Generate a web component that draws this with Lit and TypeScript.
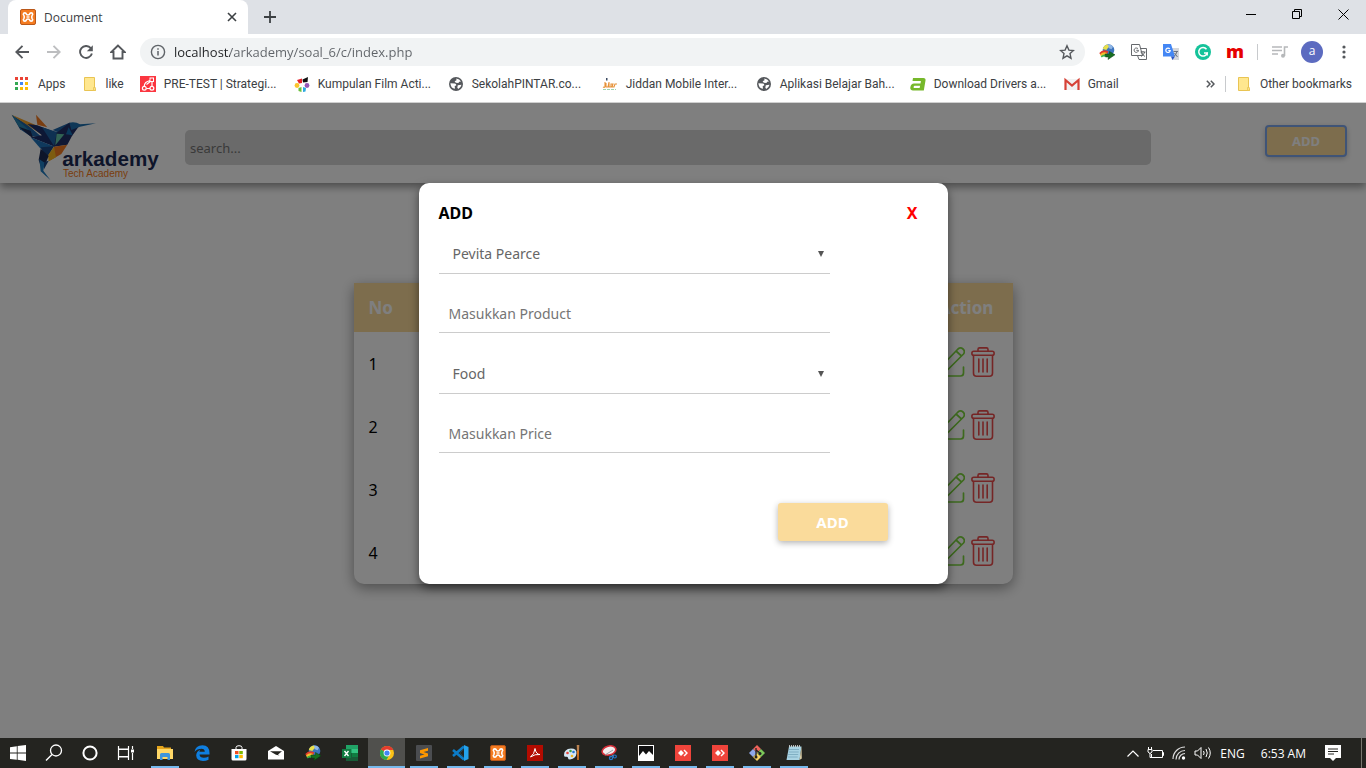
import { LitElement, html, css, svg, nothing, TemplateResult } from "lit";
import { customElement, state } from "lit/decorators.js";

const icon = (w: number, h: number, box: string, body: unknown) =>
  html`<svg width=${w} height=${h} viewBox=${box} aria-hidden="true">${body}</svg>`;

const xampp = icon(16, 16, "0 0 16 16", svg`
  <rect x=".5" y=".5" width="15" height="15" rx="1.5" fill="#f47b20" stroke="#b9581a"/>
  <path d="M3.700 4.200Q5 3.400 6 4.400 6.500 6 8 6q1.500 0 2-1.600 1-1 2.300-.2.900 1.300-.3 2.500-.5 1.300 0 2.600 1.200 1.200.3 2.500-1.300.8-2.300-.2-.5-1.600-2-1.600t-2 1.600q-1 1-2.300.2-.9-1.300.3-2.500.5-1.300 0-2.600-1.200-1.200-.3-2.500z" fill="none" stroke="#fff" stroke-width="1.600" stroke-linejoin="round"/>
  <path d="M6.500 8h3" stroke="#fff" stroke-width="1.400"/>`);

const folder = icon(16, 16, "0 0 16 16", svg`
  <path d="M2.500 1.500h10v10.500l1 1v1.500h-11z" fill="#ffe78f" stroke="#e9c453"/>
  <path d="M11.500 14.500v-3h1.800v3z" fill="#ffe78f" stroke="#e9c453" stroke-width=".8"/>`);

const globe = icon(16, 16, "0 0 16 16", svg`
  <circle cx="8" cy="8" r="7" fill="#55585c"/>
  <path d="M2.400 7.300l4.600.2q1.600.4 1.200 2l-1.500.6.300 2.700Q2.600 12.300 2.400 7.300zM8.300 2.400q3.300.2 4.700 3.100l-1.800.3-.8 1.300-2.600-.3-1.200-1.500 1.900-1zM9.800 9.200l3.700-.4q-.6 2.900-3.300 4.300l-.9-1.700z" fill="#fff"/>`);

const idm = icon(16, 16, "0 0 16 16", svg`
  <circle cx="9.500" cy="6" r="5.800" fill="#3d74bd"/>
  <path d="M8 .8q4-.8 6 2l-1.500 2.500-2.500-1z" fill="#8fb6e6"/>
  <path d="M3.800 5q.8-4 5-4.500l1 2.500-2.500 3z" fill="#e9e04a"/>
  <path d="M.3 9Q4 4.500 9.500 7.500L8 10Q4 8 1.500 11z" fill="#e23c2c"/>
  <path d="M1 10.600q3.500-3.500 7-1.600l-1.200 2q-2.500-1-4.800 1.300z" fill="#f5bd2c"/>
  <path d="M1.700 12.200q2.800-2.600 5.300-1.400l-1 2q-1.700-.6-3.200.7z" fill="#3ab54a"/>
  <path d="M6 10h4.500V7.500L16 10.800 9 15.500l.5-2.500H6.500z" fill="#176f20" stroke="#0c3f12" stroke-width=".5"/>`);

const apps = icon(16, 16, "0 0 16 16", svg`
  ${["#ea4335", "#ea4335", "#ea4335", "#34a853", "#4285f4", "#fbbc05", "#34a853", "#fbbc05", "#fbbc05"].map(
    (c, i) => svg`<rect x=${1 + (i % 3) * 5} y=${1 + Math.floor(i / 3) * 5} width="3" height="3" fill=${c}/>`)}`);

const bookmarks: { label: string; icon: TemplateResult; wide?: boolean }[] = [
  { label: "Apps", icon: apps },
  { label: "like", icon: folder },
  { label: "PRE-TEST | Strategi...", wide: true, icon: icon(16, 16, "0 0 16 16", svg`
    <rect width="16" height="16" fill="#fb3640"/>
    <path d="M4.500 12.500Q3.500 7 7.500 5.500L11.500 4M4.500 12.500h7.200M12 4.500v7M6.500 8.500L11 5" fill="none" stroke="#fff" stroke-width="1.200"/>
    <circle cx="4.300" cy="12.300" r="1.900" fill="#fb3640" stroke="#fff" stroke-width="1.200"/><circle cx="11.900" cy="12.300" r="1.900" fill="#fb3640" stroke="#fff" stroke-width="1.200"/><rect x="10" y="2" width="3.500" height="3.500" fill="#fb3640" stroke="#fff"/>`) },
  { label: "Kumpulan Film Acti...", wide: true, icon: icon(16, 16, "0 0 16 16", svg`
    <path d="M3 4l5-1.500V7l-3 .5z" fill="#e5232b"/><path d="M8.500 3.500L14 1l-.5 5-4.500.5z" fill="#111"/>
    <circle cx="3" cy="9.500" r="2.400" fill="#fbc52d"/><circle cx="13" cy="9.500" r="2.400" fill="#9656b5"/>
    <path d="M4.500 12l3-1v5l-3-1z" fill="#6cbf3c"/><path d="M9 11l3 1-.5 3.500L9 16z" fill="#2ca9e1"/>`) },
  { label: "SekolahPINTAR.co...", wide: true, icon: globe },
  { label: "Jiddan Mobile Inter...", wide: true, icon: icon(16, 16, "0 0 16 16", svg`
    <path d="M1 11q2 1 2-1V6M4 7v4h2l1-5v5h2V8h2l-1 3h2l1-3h2" fill="none" stroke="#e69138" stroke-width="1.100"/>
    <rect x="4" y="2" width="1.500" height="2.500" fill="#3c4b62"/><path d="M1 13.500h13" stroke="#9fd3b0" stroke-dasharray="3 1"/>`) },
  { label: "Aplikasi Belajar Bah...", wide: true, icon: globe },
  { label: "Download Drivers a...", wide: true, icon: icon(16, 16, "0 0 16 16", svg`
    <path d="M3 2h10.500q2.500 0 2 2.500L13.800 14.500H3Q-.3 14.500.4 11 1 7.500 4 7.500h6.500l.4-2.500H2.500zM4.800 9.800q-1 0-1.200 1.200-.1 1.100 1 1.100h5l.5-2.300z" fill="#76b82a"/>`) },
  { label: "Gmail", icon: icon(16, 16, "0 0 16 16", svg`
    <rect x="1" y="3" width="14" height="11" rx="1" fill="#f2f2f2"/>
    <path d="M1.500 14V4L8 9.500 14.500 4v10" fill="none" stroke="#d64237" stroke-width="2.200"/>`) },
];

const extensions = [
  { name: "Internet Download Manager", icon: idm },
  { name: "Translate page", icon: icon(16, 16, "0 0 16 16", svg`
    <path d="M.5.500h8l3 11h-11zM9 4.500h6.500v11H8l-1.500-4" fill="none" stroke="#66696d"/>
    <path d="M7 4.800a2.200 2.200 0 1 0 .5 1.500H5.300M9.500 8h5M12 7v1M13.800 8q-1 3-3.800 4.500M10.500 8.500q1 2.500 3.500 4" fill="none" stroke="#66696d"/>`) },
  { name: "Google Translate", icon: icon(16, 16, "0 0 16 16", svg`
    <path d="M7 4h9v12H9z" fill="#d5d7db"/><path d="M0 0h8l4 12.500H0z" fill="#4487f4"/><path d="M8 12.500h4L9.500 16z" fill="#2a56c6"/>
    <path d="M6.800 5a2.200 2.200 0 1 0 .4 1.600H5.300" fill="none" stroke="#fff" stroke-width="1.200"/>
    <path d="M10.500 7.500h4.500M14 7.500q-1 3-2.500 4.500M11.500 9l3 4" stroke="#6b7380" fill="none"/>`) },
  { name: "Grammarly", icon: icon(16, 16, "0 0 16 16", svg`
    <circle cx="8" cy="8" r="8" fill="#15c39a"/><path d="M11.500 5.200A4.300 4.300 0 1 0 12.200 9H9" fill="none" stroke="#fff" stroke-width="1.500"/><path d="M12.300 8.500v3" stroke="#fff" stroke-width="1.200"/>`) },
];

const startItems = [
  { name: "Start", icon: icon(16, 16, "0 0 16 16", svg`<path d="M0 2.200l6.800-1v6.300H0zM7.600 1.100L16 0v7.500H7.600zM0 8.400h6.800v6.400L0 13.900zM7.600 8.400H16V16l-8.400-1.200z" fill="#fff"/>`) },
  { name: "Search", icon: icon(18, 18, "0 0 18 18", svg`<circle cx="11" cy="6.500" r="5.500" fill="none" stroke="#fff" stroke-width="1.300"/><path d="M7 10.500L1 16.500" stroke="#fff" stroke-width="1.500"/>`) },
  { name: "Cortana", icon: icon(16, 16, "0 0 16 16", svg`<circle cx="8" cy="8" r="6.600" fill="none" stroke="#fff" stroke-width="2"/>`) },
  { name: "Task View", icon: icon(18, 16, "0 0 18 16", svg`<path d="M1.500 1v3h10V1M1.500 15v-3h10v3M1.500 4.500v7h10v-7zM15.500 1v3M15.500 8v7" fill="none" stroke="#fff" stroke-width="1.200"/><rect x="14" y="4.500" width="3" height="3" fill="#fff"/>`) },
];

const anydesk = icon(16, 16, "0 0 16 16", svg`<rect width="16" height="16" fill="#ef443b"/><path d="M3 8l3-3 3 3-3 3z" fill="#fff"/><path d="M8.500 5.500l1-1L13 8l-3.500 3.500-1-1L11 8z" fill="#fff"/>`);

const taskItems: { name: string; open?: boolean; active?: boolean; icon: TemplateResult }[] = [
  { name: "File Explorer", open: true, icon: icon(16, 16, "0 0 16 16", svg`<path d="M0 1h6l1 1.500h7V5H0z" fill="#e5a51c"/><path d="M0 4h16v10H0z" fill="#ffd867"/><path d="M3 15V9.500Q3 8 4.500 8h7Q13 8 13 9.500V15h-2.500v-3h-5v3z" fill="#3d95dc"/>`) },
  { name: "Edge", icon: icon(16, 16, "0 0 16 16", svg`<path d="M.5 7Q1.500.200 8.500.200 15.500.500 15.500 8v1.500h-10q.3 3.200 4.300 3.200 2.500 0 4.700-1.300v3.300Q12 16 9 16 2.500 15.800 2.200 10.500 2.200 6.500 6.500 4.500 5.500 5.500 5.400 6.800h5.400Q10.700 3.700 7.600 3.700 3 3.700.5 7z" fill="#0f7fe0"/>`) },
  { name: "Store", icon: icon(16, 16, "0 0 16 16", svg`<path d="M5 4V2.500Q5 .700 8 .700t3 1.800V4" fill="none" stroke="#fff"/><path d="M.5 4h15v10q0 1.500-1.500 1.500H2Q.500 15.500.500 14z" fill="#fff"/><rect x="4" y="6" width="3.500" height="3.200" fill="#f25022"/><rect x="8.300" y="6" width="3.500" height="3.200" fill="#7fba00"/><rect x="4" y="10" width="3.500" height="3.200" fill="#00a4ef"/><rect x="8.300" y="10" width="3.500" height="3.200" fill="#ffb900"/>`) },
  { name: "Mail", icon: icon(18, 16, "0 0 18 16", svg`<path d="M1 6l8-5 8 5v8.500H1z" fill="#fff"/><path d="M3 6.200h12L11 9.500l1.500 1-3.500-.8z" fill="#242420"/>`) },
  { name: "Internet Download Manager", icon: idm },
  { name: "Excel", icon: icon(16, 16, "0 0 16 16", svg`<path d="M4 0h12v16H4z" fill="#21a366"/><path d="M10 4h6v4h-6z" fill="#33c481"/><path d="M4 8h12v8H4z" fill="#185c37"/><path d="M10 8h6v4h-6z" fill="#107c41"/><rect y="4" width="9" height="9" fill="#107c41"/><path d="M2.500 6l4 5M6.500 6l-4 5" stroke="#fff" stroke-width="1.400"/>`) },
  { name: "Chrome", open: true, active: true, icon: icon(16, 16, "0 0 16 16", svg`<circle cx="8" cy="8" r="7" fill="#fbc116"/><path d="M8 8L1.900 4.500A7 7 0 0 1 14.300 5H8z" fill="#e33b2e"/><path d="M8 8L1.900 4.500A7 7 0 0 0 7.500 15L10.500 9.500z" fill="#2da94f"/><circle cx="8" cy="8" r="3.400" fill="#fff"/><circle cx="8" cy="8" r="2.600" fill="#4285f4"/>`) },
  { name: "Sublime Text", open: true, icon: icon(16, 16, "0 0 16 16", svg`<rect width="16" height="16" rx="1" fill="#4b4d50"/><path d="M4 5.200L12 3v2.700L7.500 7 12 8.500v2.800L4 13.500v-2.700l4.500-1.300L4 8z" fill="#ff9800"/>`) },
  { name: "Visual Studio Code", open: true, icon: icon(17, 16, "0 0 17 16", svg`<path d="M12 1.500L1 11M12 14.500L1 5" stroke="#0c7cc7" stroke-width="2.600"/><path d="M12 0l4.500 2v12L12 16V11.500L7.500 8 12 4.500z" fill="#24a2ec"/><path d="M12 4.500v7L7.500 8z" fill="#242420"/>`) },
  { name: "XAMPP", open: true, icon: xampp },
  { name: "Adobe Reader", open: true, icon: icon(16, 16, "0 0 16 16", svg`<rect width="16" height="16" fill="#b30b00"/><path d="M3.500 12q4-3 4.500-8.500 1 6 5 6-5-.700-9.500 2.500z" fill="none" stroke="#fff"/>`) },
  { name: "Paint", open: true, icon: icon(16, 16, "0 0 16 16", svg`<path d="M0 10Q0 4 7 3.500q6 0 5.500 5T6 14.500q-2 0-2-1.500t-2-1.200T0 10z" fill="#d5e7f4"/><circle cx="3.500" cy="8" r="1.300" fill="#e3453a"/><circle cx="6.500" cy="6" r="1.300" fill="#40a546"/><circle cx="9.500" cy="7" r="1.300" fill="#2a75cf"/><circle cx="8" cy="11" r="1.300" fill="#efb921"/><path d="M13 6h2l-.3 9h-1.400z" fill="#e67a1f"/><path d="M12.700 0h2.600l-.3 6h-2z" fill="#b98150"/>`) },
  { name: "Snipping Tool", open: true, icon: icon(16, 16, "0 0 16 16", svg`<ellipse cx="8" cy="5.500" rx="7" ry="4.500" fill="#f4eeee" stroke="#d6303a" stroke-width="1.600" transform="rotate(-15 8 5.500)"/><path d="M4 10l8-5M9 12l4-2" stroke="#9ca4ab"/><circle cx="10" cy="13" r="1.600" fill="none" stroke="#2777c9" stroke-width="1.200"/><circle cx="13.800" cy="11.500" r="1.500" fill="none" stroke="#2777c9" stroke-width="1.200"/>`) },
  { name: "Photos", open: true, icon: icon(16, 16, "0 0 16 16", svg`<rect x=".5" y=".5" width="15" height="15" fill="#111" stroke="#fff"/><path d="M1 11l4-5 3 3.500 3-3.500 4 4v5H1z" fill="#fff"/>`) },
  { name: "AnyDesk", open: true, icon: anydesk },
  { name: "AnyDesk session", open: true, icon: anydesk },
  { name: "Git Bash", open: true, icon: icon(16, 16, "0 0 16 16", svg`<path d="M8 0l4 4-4 4-4-4z" fill="#f0635a"/><path d="M4 4l4 4-4 4-4-4z" fill="#8fa8ea"/><path d="M12 4l4 4-4 4-4-4z" fill="#7cc95a"/><path d="M8 8l4 4-4 4-4-4z" fill="#f6d263"/><path d="M7 3v9M7 5l4 3" stroke="#222" stroke-width="1.300"/><circle cx="7" cy="12" r="1.500" fill="#222"/><circle cx="11" cy="8.500" r="1.500" fill="#222"/>`) },
  { name: "Notepad", open: true, icon: icon(16, 16, "0 0 16 16", svg`<path d="M3 1.500h12.500L13.500 15H.500z" fill="#a9d3e3"/><path d="M15.500 1.500l.3 12-2.300 1.500z" fill="#d9cda6"/><path d="M3 4.500h10M2.700 7h10M2.200 9.500h10M1.700 12h10" stroke="#6f9fb4" stroke-width=".7"/><path d="M3 1h12" stroke="#e9e9e9" stroke-width="1.500" stroke-dasharray="1 1"/>`) },
];

const pencil = icon(30, 30, "0 0 30 30", svg`
  <g fill="none" stroke="#7bd33c" stroke-width="1.700" stroke-linejoin="round" stroke-linecap="round">
  <path d="M28.500 20v6q0 3-3 3H4q-3 0-3-3V7q0-3 3-3h7"/><path d="M23 2q2.500-2.200 5 0t.5 5L13 22.500l-6 1.500 1-6.500zM21 4l5.500 5"/></g>`);
const trash = icon(24, 30, "0 0 24 30", svg`
  <g fill="none" stroke="#ea4c4c" stroke-width="1.600" stroke-linejoin="round" stroke-linecap="round">
  <rect x=".9" y="4.200" width="22.200" height="4" rx="1.800"/><path d="M7 4V2.500Q7 .900 8.500 .900h7q1.500 0 1.500 1.600V4M2.500 8.500v17.700q0 3 3 3h13q3 0 3-3V8.500M7.800 12v13M12 12v13M16.200 12v13"/></g>`);

const logo = html`<svg class="logo" width="148" height="68" viewBox="33 33 444 204" role="img" aria-label="arkademy Tech Academy">
  <path d="M35 38L60 82 92 103 126 106 80 66z" fill="#1c63a5"/>
  <path d="M35 38L62 82 96 92z" fill="#2b86b0"/>
  <path d="M35 38L128 78 126 98z" fill="#f6a528"/><path d="M84 62L128 78 126 98z" fill="#f47b20"/>
  <path d="M56 74L92 86 100 110z" fill="#1b2a55"/>
  <path d="M82 66L112 70 170 92 164 134 92 106 126 100z" fill="#1b2f6b"/>
  <path d="M108 38L142 76 112 68z" fill="#f47b20"/>
  <path d="M126 76L178 92 158 84 208 62 192 96 162 132z" fill="#1c63a5"/>
  <path d="M170 92L208 62 240 68 216 102 202 128 162 134z" fill="#203068"/>
  <path d="M208 62Q226 58 240 67L288 64 240 74 214 84z" fill="#1c6fae"/>
  <path d="M170 95L193 97 166 130z" fill="#62c7a8"/>
  <path d="M206 76L218 100 198 97z" fill="#1573b6"/>
  <path d="M92 106L164 134 122 140z" fill="#1e73ba"/>
  <path d="M122 136L162 133 138 172z" fill="#1a4784"/>
  <path d="M162 134L202 128 184 156 146 178z" fill="#f47b20"/><path d="M162 134L168 166 146 178 144 160z" fill="#fbb91f"/>
  <path d="M122 140L146 162 132 196 120 186 116 174z" fill="#1b2a55"/>
  <path d="M118 172L134 182 130 206 151 234 122 208z" fill="#1f7cc0"/><path d="M132 180L146 176 132 202z" fill="#1a4784"/>
  <text class="brand" x="187" y="192">arkademy</text><text class="tagline" x="189" y="224">Tech Academy</text>
</svg>`;

@customElement("app-root")
export class AppRoot extends LitElement {
  @state() private open = true;

  static styles = css`
    :host { display: block; font-family: "Open Sans", "Noto Sans", sans-serif; font-size: 12px; color: #3c4043; }
    * { box-sizing: border-box; }
    svg { display: block; flex: none; }
    button, input, select { font: inherit; color: inherit; margin: 0; border: 0; background: none; padding: 0; border-radius: 0; outline: none; }
    a { color: inherit; text-decoration: none; }
    .screen { display: grid; grid-template-rows: auto 1fr auto; height: 100vh; min-height: 640px; }

    .tabs { display: flex; align-items: stretch; height: 34px; background: #dee1e6; padding-left: 8px; }
    .tab { display: flex; align-items: center; gap: 8px; width: 240px; padding: 0 11px 0 12px; background: #fff; border-radius: 8px 8px 0 0; }
    .tab span { flex: 1; }
    .plus { width: 44px; display: grid; place-items: center; }
    .window { margin-left: auto; display: flex; }
    .window button { width: 46px; height: 28px; display: grid; place-items: center; }
    .toolbar { display: flex; align-items: center; height: 36px; background: #fff; padding: 0 6px; }
    .nav { width: 32px; height: 32px; display: grid; place-items: center; }
    .address { flex: 1; display: flex; align-items: center; gap: 8px; height: 28px; margin: 0 6px; padding: 0 10px; border-radius: 14px; background: #f1f3f4; }
    .address input { flex: 1; min-width: 0; height: 28px; font-size: 13px; color: transparent; background: linear-gradient(to right, #202124 56px, #5f6368 56px); -webkit-background-clip: text; background-clip: text; }
    .rule { width: 1px; height: 16px; background: #c8cacd; margin: 0 6px; }
    .m { font: 900 18px/18px "Noto Sans", sans-serif; color: #e60000; padding-bottom: 3px; }
    .avatar { width: 22px; height: 22px; border-radius: 50%; background: #5c6bc0; color: #fff; line-height: 20px; }
    .bookmarks { display: flex; align-items: center; gap: 16px; height: 33px; padding: 0 14px 5px; background: #fff; border-bottom: 1px solid #d0d0d0; white-space: nowrap; font-family: Roboto, "Open Sans", sans-serif; }
    .bookmarks a { display: flex; align-items: center; gap: 8px; }
    .bookmarks a.wide { width: 138px; }
    .bookmarks .rule { margin: 0 -6px; }
    .bookmarks .more { margin-left: auto; }

    .page { position: relative; background: #fff; font-family: "Noto Sans", sans-serif; font-size: 16px; color: #000; overflow: hidden; }
    .head { display: flex; align-items: flex-start; height: 80px; padding: 10px 20px 0 11px; box-shadow: 0 4px 8px rgba(0, 0, 0, 0.4); }
    .brand { font: 700 62px "Liberation Sans", Arial, sans-serif; fill: #1b2a55; }
    .tagline { font: 400 30px "Liberation Sans", Arial, sans-serif; fill: #f47b20; }
    .search { flex: 1; min-width: 0; height: 35px; margin: 17px 115px 0 26px; padding: 0 5px; border-radius: 5px; background: #d4d4d4; font-size: 13px; }
    .search::placeholder { color: #757575; opacity: 1; }
    .gold { background: #fadb9b; color: #fff; font-weight: 700; border-radius: 3px; box-shadow: 0 2px 6px rgba(0, 0, 0, 0.3); }
    .open { width: 80px; height: 30px; margin-top: 13px; font-size: 13px; outline: 2px solid #7fa8ee; outline-offset: -1px; }
    .list { width: 659px; max-width: 90%; margin: 100px auto 0; border-collapse: collapse; border-radius: 0 0 10px 10px; box-shadow: 0 4px 14px rgba(0, 0, 0, 0.4); }
    .list th { height: 49px; padding: 0 15px; background: #fadb9b; color: #fff; text-align: left; font-size: 17px; font-weight: 700; }
    .list td { height: 63px; padding: 0 15px; }
    .list .last { width: 93px; text-align: center; }
    .actions { display: flex; gap: 6px; padding-bottom: 4px; }

    .overlay { position: absolute; inset: 0; display: flex; justify-content: center; align-items: flex-start; padding-top: 80px; background: rgba(0, 0, 0, 0.5); }
    .modal { width: 529px; max-width: 90%; padding: 20px 20px 43px; background: #fff; border-radius: 10px; box-shadow: 0 4px 10px rgba(0, 0, 0, 0.5); }
    .title { display: flex; justify-content: space-between; align-items: center; height: 20px; margin-bottom: 10px; padding-right: 10px; }
    .title h2 { margin: 0; font-size: 16px; line-height: 20px; }
    .title button { color: #f00; font-weight: 700; line-height: 20px; }
    form { display: flex; flex-direction: column; gap: 20px; font-size: 14px; color: #666; }
    .field { display: grid; align-items: center; width: 80%; }
    .field select, .field input { width: 100%; border-bottom: 1px solid #ccc; grid-area: 1 / 1; }
    .field select { appearance: none; height: 41px; padding-left: 14px; }
    .field input { height: 39px; padding-left: 10px; }
    .field input::placeholder { color: #757575; opacity: 1; }
    .field svg { grid-area: 1 / 1; justify-self: end; margin-right: 6px; pointer-events: none; }
    .submit { align-self: flex-end; width: 110px; height: 38px; margin: 30px 40px 0 0; color: #fff; font-size: 15px; }

    .taskbar { display: flex; height: 30px; background: #242420; color: #fff; }
    .taskbar button { width: 37px; height: 30px; display: grid; place-items: center; }
    .start { display: flex; margin-right: 2px; }
    .start button { width: 36px; }
    .apps { display: flex; }
    .apps .running { background: linear-gradient(#76b9ed, #76b9ed) center bottom / 28px 2px no-repeat; }
    .apps .active { background: linear-gradient(#76b9ed, #76b9ed) center bottom / 100% 2px no-repeat, #50504d; }
    .tray { margin-left: auto; display: flex; align-items: center; gap: 8px; padding-right: 10px; border-right: 1px solid #77776f; margin-right: 4px; }
    .tray .clock { margin-left: 8px; }
  `;

  private select(label: string, value: string) {
    return html`<div class="field">
      <select aria-label=${label}><option>${value}</option></select>
      ${icon(6, 6, "0 0 6 6", svg`<path d="M0 0h6L3 6z" fill="#555"/>`)}
    </div>`;
  }

  private modal() {
    return html`<div class="overlay">
      <section class="modal" role="dialog" aria-labelledby="dialog-title">
        <div class="title"><h2 id="dialog-title">ADD</h2><button @click=${() => (this.open = false)}>X</button></div>
        <form @submit=${(e: Event) => e.preventDefault()}>
          ${this.select("Cashier", "Pevita Pearce")}
          <div class="field"><input aria-label="Product" placeholder="Masukkan Product" /></div>
          ${this.select("Category", "Food")}
          <div class="field"><input aria-label="Price" placeholder="Masukkan Price" /></div>
          <button class="gold submit">ADD</button>
        </form>
      </section>
    </div>`;
  }

  render() {
    return html`<div class="screen">
      <header>
        <div class="tabs">
          <div class="tab">${xampp}<span>Document</span>
            <button aria-label="Close tab">${icon(10, 10, "0 0 10 10", svg`<path d="M1 1l8 8M9 1l-8 8" stroke="#3c4043" stroke-width="1.600"/>`)}</button></div>
          <button class="plus" aria-label="New tab">${icon(12, 12, "0 0 12 12", svg`<path d="M6 0v12M0 6h12" stroke="#3c4043" stroke-width="1.800"/>`)}</button>
          <div class="window">
            <button aria-label="Minimize">${icon(10, 10, "0 0 10 10", svg`<path d="M0 5.500h10" stroke="#000"/>`)}</button>
            <button aria-label="Restore">${icon(10, 10, "0 0 10 10", svg`<path d="M.5 2.500h7v7h-7zM2.500 2.500v-2h7v7h-2" fill="none" stroke="#000"/>`)}</button>
            <button aria-label="Close">${icon(11, 11, "0 0 11 11", svg`<path d="M.5.500l10 10M10.500.500l-10 10" stroke="#000"/>`)}</button>
          </div>
        </div>
        <div class="toolbar">
          <button class="nav" aria-label="Back">${icon(14, 14, "0 0 14 14", svg`<path d="M14 7H1.500M7.500.800L1.300 7l6.200 6.200" fill="none" stroke="#55585c" stroke-width="1.900"/>`)}</button>
          <button class="nav" aria-label="Forward">${icon(14, 14, "0 0 14 14", svg`<path d="M0 7h12.500M6.500.800L12.700 7l-6.200 6.200" fill="none" stroke="#bdbec0" stroke-width="1.900"/>`)}</button>
          <button class="nav" aria-label="Reload">${icon(14, 14, "0 0 14 14", svg`<path d="M11.800 3.200A6 6 0 1 0 12.900 8.500" fill="none" stroke="#55585c" stroke-width="1.900"/><path d="M13.800.300v6H7.800z" fill="#55585c"/>`)}</button>
          <button class="nav" aria-label="Home">${icon(16, 16, "0 0 16 16", svg`<path d="M8 1.500L1.300 8H3.500v6.500h9V8h2.200z" fill="none" stroke="#55585c" stroke-width="1.900"/>`)}</button>
          <div class="address">
            ${icon(16, 16, "0 0 16 16", svg`<circle cx="8" cy="8" r="6.600" fill="none" stroke="#5f6368" stroke-width="1.400"/><path d="M8 7v4.500M8 4.300v1.500" stroke="#5f6368" stroke-width="1.500"/>`)}
            <input aria-label="Address" .value=${"localhost/arkademy/soal_6/c/index.php"} />
            <button aria-label="Bookmark this page">${icon(16, 16, "0 0 16 16", svg`<path d="M8 1.800l1.900 4.300 4.600.4-3.500 3.100 1 4.600L8 11.800l-4 2.400 1-4.600L1.500 6.500l4.600-.4z" fill="none" stroke="#55585c" stroke-width="1.400"/>`)}</button>
          </div>
          ${extensions.map((e) => html`<button class="nav" aria-label=${e.name}>${e.icon}</button>`)}
          <button class="nav" aria-label="Mendeley"><span class="m">m</span></button>
          <span class="rule"></span>
          <button class="nav" aria-label="Media queue">${icon(16, 12, "0 0 16 12", svg`<path d="M0 1h10M0 4.500h10M0 8h6M12.500 10V1H16" fill="none" stroke="#b6b8ba" stroke-width="1.600"/><circle cx="11" cy="9.700" r="2" fill="#b6b8ba"/>`)}</button>
          <button class="nav" aria-label="Profile"><span class="avatar">a</span></button>
          <button class="nav" aria-label="Menu">${icon(4, 14, "0 0 4 14", svg`<g fill="#55585c"><circle cx="2" cy="2" r="1.600"/><circle cx="2" cy="7" r="1.600"/><circle cx="2" cy="12" r="1.600"/></g>`)}</button>
        </div>
        <nav class="bookmarks" aria-label="Bookmarks">
          ${bookmarks.map((b) => html`<a href="#" class=${b.wide ? "wide" : ""}>${b.icon}<span>${b.label}</span></a>`)}
          <button class="more" aria-label="More bookmarks">${icon(9, 8, "0 0 9 8", svg`<path d="M.8.800L4 4 .8 7.200M4.800.800L8 4 4.800 7.200" fill="none" stroke="#55585c" stroke-width="1.500"/>`)}</button><span class="rule"></span>
          <a href="#">${folder}<span>Other bookmarks</span></a>
        </nav>
      </header>

      <main class="page">
        <div class="head">${logo}
          <input class="search" type="search" aria-label="Search" placeholder="search..." />
          <button class="gold open" @click=${() => (this.open = true)}>ADD</button>
        </div>
        <table class="list">
          <thead><tr><th>No</th><th class="last">Action</th></tr></thead>
          <tbody>${[1, 2, 3, 4].map((n) => html`<tr><td>${n}</td><td><div class="actions">
            <button aria-label="Edit">${pencil}</button><button aria-label="Delete">${trash}</button></div></td></tr>`)}</tbody>
        </table>
        ${this.open ? this.modal() : nothing}
      </main>

      <footer class="taskbar">
        <div class="start">${startItems.map((t) => html`<button aria-label=${t.name}>${t.icon}</button>`)}</div>
        <div class="apps">${taskItems.map((t) => html`<button aria-label=${t.name} class=${t.active ? "active" : t.open ? "running" : ""}>${t.icon}</button>`)}</div>
        <div class="tray">
          ${icon(12, 7, "0 0 12 7", svg`<path d="M.5 6.500L6 1l5.500 5.500" fill="none" stroke="#fff" stroke-width="1.200"/>`)}
          ${icon(17, 14, "0 0 17 14", svg`<path d="M6 4.500h9.500v7H4.500V8M15.500 6.500h1v3h-1M1.500 1v2M4.500 1v2M1 3.500h4V6L3 7.500 1 6zM3 7v4.500h2" fill="none" stroke="#fff"/>`)}
          ${icon(14, 14, "0 0 14 14", svg`<path d="M1 13A12 12 0 0 1 13 1M4 13.500A9 9 0 0 1 13 4.500M7 13.500A6 6 0 0 1 13 7.500" fill="none" stroke="#ddd" stroke-width="1.200"/><circle cx="11.500" cy="12" r="1.700" fill="#fff"/>`)}
          ${icon(18, 14, "0 0 18 14", svg`<path d="M1 5h2.500L7 1.500v11L3.500 9H1zM9.500 5q1.300 2 0 4M12 3q2.500 4 0 8M14.500 1.500q3.500 5.500 0 11" fill="none" stroke="#fff"/>`)}
          <span>ENG</span><time class="clock">6:53 AM</time>
          <button class="note" aria-label="Notifications">${icon(16, 16, "0 0 16 16", svg`<path d="M0 0h16v13h-5l-3 3-3-3H0z" fill="#fff"/><path d="M3 4h10M3 6.500h10M3 9h6" stroke="#242420"/>`)}</button>
        </div>
      </footer>
    </div>`;
  }
}
